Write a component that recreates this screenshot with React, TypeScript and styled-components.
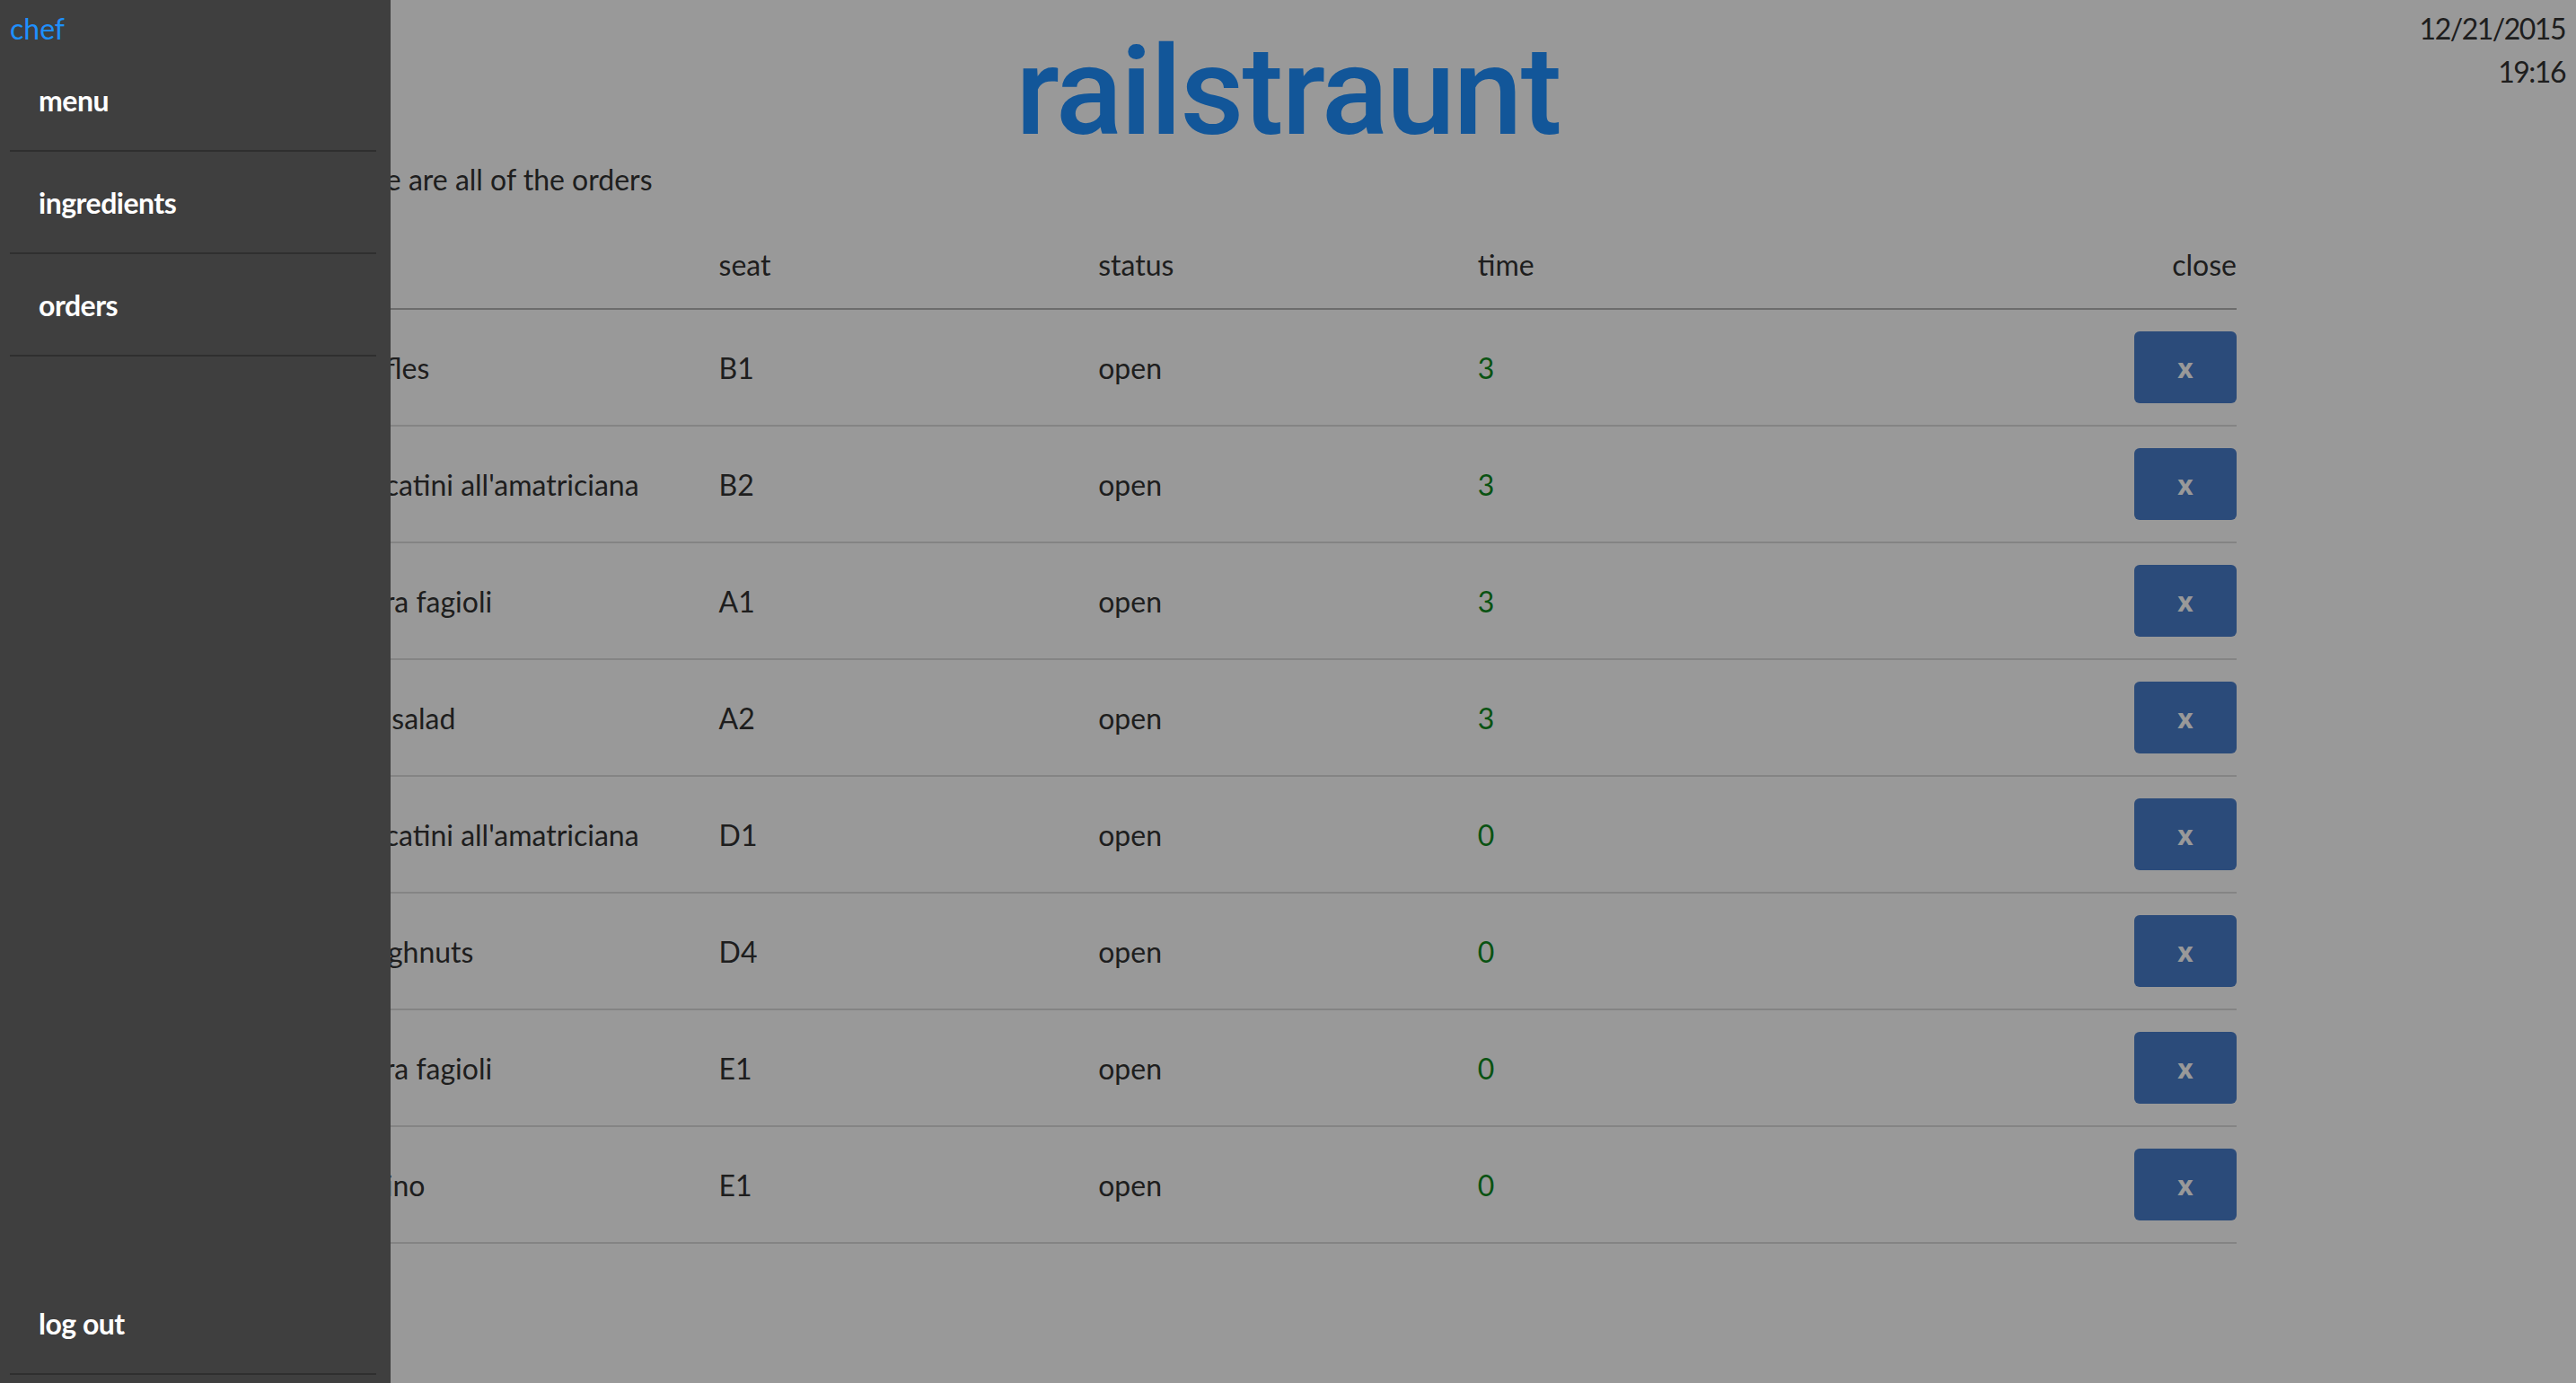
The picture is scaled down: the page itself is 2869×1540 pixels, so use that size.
import React from "react";
import styled, { createGlobalStyle } from "styled-components";

const Global = createGlobalStyle`
  html, body { margin: 0; padding: 0; background: #fff; }
  body { font-family: Lato, "Noto Sans", sans-serif; font-size: 32px; color: #333; }
`;

const Page = styled.div`
  position: relative;
  width: 2869px;
  height: 1540px;
  overflow: hidden;
  background: #fff;
`;

const Clock = styled.div`
  position: absolute;
  top: 8px;
  right: 12px;
  text-align: right;
  line-height: 48px;
  font-size: 32px;
  letter-spacing: -1.5px;
`;

const Main = styled.main`
  width: 2113px;
  margin: 0 auto;
  display: flex;
  flex-direction: column;
`;

const Logo = styled.h1`
  margin: 0;
  height: 172px;
  text-align: center;
  font-family: Roboto, "Open Sans", sans-serif;
  font-weight: 500;
  font-size: 138px;
  line-height: 204px;
  color: #1e90ff;
  letter-spacing: -2px;
`;

const Intro = styled.p`
  margin: 0;
  height: 84px;
  line-height: 56px;
`;

const Table = styled.div`
  display: flex;
  flex-direction: column;
`;

const Row = styled.div<{ $head?: boolean }>`
  display: grid;
  grid-template-columns: repeat(4, 422.6px) 1fr;
  align-items: center;
  box-sizing: content-box;
  height: ${(p) => (p.$head ? "77px" : "128px")};
  padding-bottom: ${(p) => (p.$head ? "10px" : "0")};
  border-bottom: 2px solid ${(p) => (p.$head ? "#b5b5b5" : "#dddddd")};
`;

const Cell = styled.div<{ $end?: boolean }>`
  display: flex;
  justify-content: ${(p) => (p.$end ? "flex-end" : "flex-start")};
`;

const Time = styled(Cell)`
  color: #108a20;
`;

const CloseButton = styled.button`
  width: 114px;
  height: 80px;
  border: 0;
  border-radius: 6px;
  background: #487dcb;
  color: #fff;
  font-family: "Open Sans", sans-serif;
  font-weight: 700;
  font-size: 30px;
  padding: 0;
`;

const Overlay = styled.div`
  position: absolute;
  inset: 0;
  background: rgba(0, 0, 0, 0.4);
`;

const Drawer = styled.aside`
  position: absolute;
  top: 0;
  left: 0;
  bottom: 0;
  width: 435px;
  background: #3f3f3f;
  display: flex;
  flex-direction: column;
  padding: 0 16px 0 11px;
  box-sizing: border-box;
`;

const Role = styled.div`
  color: #1e90ff;
  height: 55px;
  line-height: 64px;
`;

const NavItem = styled.a`
  display: flex;
  align-items: center;
  box-sizing: border-box;
  height: 114px;
  padding: 0 0 0 32px;
  color: #fff;
  font-weight: 700;
  letter-spacing: -0.5px;
  border-bottom: 2px solid #2f2f2f;
`;

const Spacer = styled.div`
  flex: 1;
`;

const BottomGap = styled.div`
  height: 9px;
`;

const orders = [
  ["waffles", "B1", "3"],
  ["buccatini all'amatriciana", "B2", "3"],
  ["sopra fagioli", "A1", "3"],
  ["egg salad", "A2", "3"],
  ["buccatini all'amatriciana", "D1", "0"],
  ["doughnuts", "D4", "0"],
  ["sopra fagioli", "E1", "0"],
  ["panino", "E1", "0"],
];

export default function App() {
  return (
    <Page>
      <Global />
      <Clock>
        <div>12/21/2015</div>
        <div>19:16</div>
      </Clock>
      <Main>
        <Logo>railstraunt</Logo>
        <Intro>Here are all of the orders</Intro>
        <Table>
          <Row $head>
            <Cell>dish</Cell>
            <Cell>seat</Cell>
            <Cell>status</Cell>
            <Cell>time</Cell>
            <Cell $end>close</Cell>
          </Row>
          {orders.map(([name, seat, time], i) => (
            <Row key={i}>
              <Cell>{name}</Cell>
              <Cell>{seat}</Cell>
              <Cell>open</Cell>
              <Time>{time}</Time>
              <Cell $end>
                <CloseButton>x</CloseButton>
              </Cell>
            </Row>
          ))}
        </Table>
      </Main>
      <Overlay />
      <Drawer>
        <Role>chef</Role>
        <NavItem>menu</NavItem>
        <NavItem>ingredients</NavItem>
        <NavItem>orders</NavItem>
        <Spacer />
        <NavItem>log out</NavItem>
        <BottomGap />
      </Drawer>
    </Page>
  );
}
